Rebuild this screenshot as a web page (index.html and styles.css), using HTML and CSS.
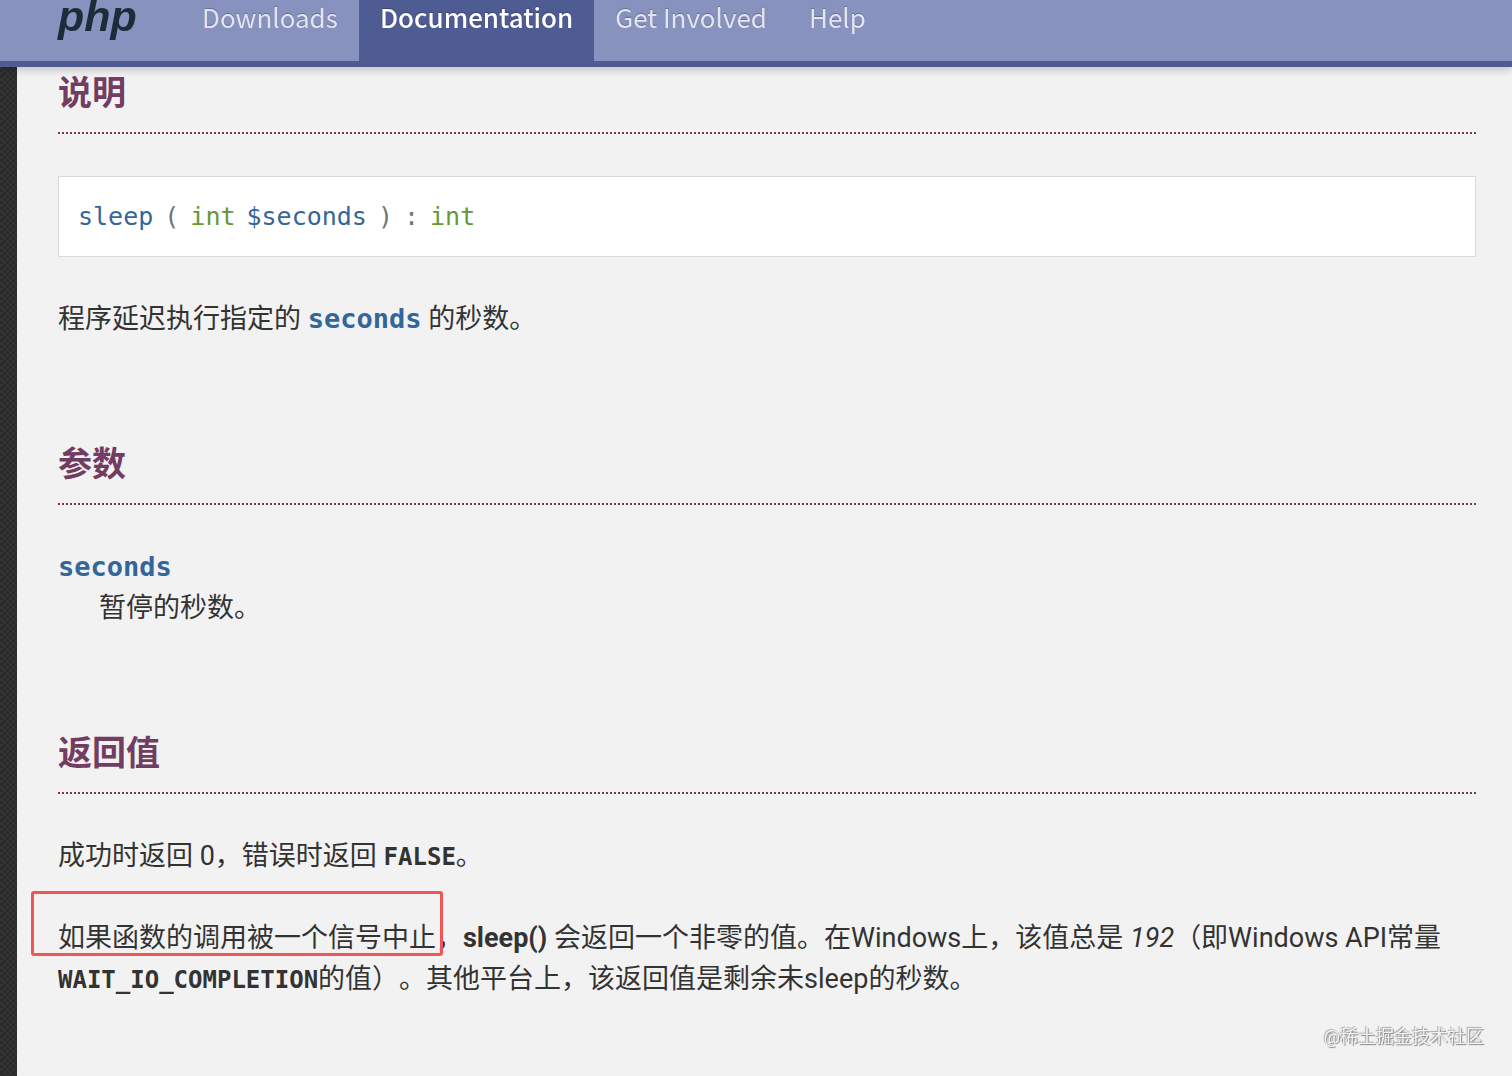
FILE: index.html
```html
<!DOCTYPE html>
<html lang="zh-CN">
<head>
  <meta charset="UTF-8">
  <meta name="viewport" content="width=device-width, initial-scale=1.0">
  <title>PHP: sleep - Manual</title>
  <link rel="stylesheet" href="styles.css">
</head>
<body>
  <header class="navbar">
    <a class="brand" href="#">php</a>
    <nav class="nav">
      <a href="#">Downloads</a>
      <a class="active" href="#">Documentation</a>
      <a href="#">Get Involved</a>
      <a href="#">Help</a>
    </nav>
  </header>

  <main class="content">
    <section class="refsect">
      <h2>说明</h2>
      <div class="synopsis">
        <span class="name">sleep</span>
        <span>(</span>
        <span class="type">int</span>
        <span class="name">$seconds</span>
        <span>)</span>
        <span>:</span>
        <span class="type">int</span>
      </div>
      <p>程序延迟执行指定的 <code class="parameter">seconds</code> 的秒数。</p>
    </section>

    <section class="refsect">
      <h2>参数</h2>
      <dl>
        <dt><code class="parameter">seconds</code></dt>
        <dd>暂停的秒数。</dd>
      </dl>
    </section>

    <section class="refsect">
      <h2>返回值</h2>
      <p>成功时返回 0，错误时返回 <strong><code>FALSE</code></strong>。</p>
      <p class="marked">如果函数的调用被一个信号中止，<strong>sleep()</strong> 会返回一个非零的值。在Windows上，该值总是 <em>192</em>（即Windows API常量 <strong><code>WAIT_IO_COMPLETION</code></strong>的值）。其他平台上，该返回值是剩余未sleep的秒数。</p>
    </section>
  </main>

  <div class="watermark">@稀土掘金技术社区</div>
</body>
</html>
```

FILE: styles.css
```css
*,
*::before {
  margin: 0;
  padding: 0;
  box-sizing: border-box;
}

body {
  min-height: 100vh;
  padding-left: 17px;
  font-family: Roboto, "Noto Sans CJK SC", sans-serif;
  font-size: 27px;
  line-height: 41px;
  color: #333;
  text-spacing-trim: space-all;
  background: repeating-conic-gradient(#2a2a2a 0 25%, #333 0 50%) 0 0 / 6px 6px;
}

/* Top bar */
.navbar {
  position: fixed;
  top: 0;
  left: 0;
  right: 0;
  z-index: 1;
  display: flex;
  height: 67px;
  padding-left: 58px;
  background: #8892bf;
  border-bottom: 6px solid #4f5b93;
  box-shadow: 0 3px 8px rgba(0, 0, 0, 0.2);
}

.brand {
  width: 123px;
  font-family: "Liberation Sans", sans-serif;
  font-size: 43px;
  font-weight: 700;
  font-style: italic;
  line-height: 32px;
  color: #1e2b38;
  text-decoration: none;
}

.nav {
  display: flex;
}

.nav a {
  padding: 0 21px;
  font-family: "Noto Sans CJK SC", sans-serif;
  font-size: 26px;
  line-height: 34px;
  color: #e2e4ef;
  text-decoration: none;
  text-shadow: 0 -1px 1px rgba(0, 0, 0, 0.25);
}

.nav .active {
  font-weight: 500;
  color: #fff;
  background: #4f5b93;
}

/* Manual page */
.content {
  min-height: 100vh;
  padding: 69px 36px 0 41px;
  background: #f2f2f2;
}

.refsect {
  margin-bottom: 100px;
}

.refsect:last-child {
  margin-bottom: 0;
}

h2 {
  margin-bottom: 42px;
  padding-bottom: 15px;
  font-size: 34px;
  font-weight: 700;
  line-height: 48px;
  color: #733d62;
  border-bottom: 2px dotted #793862;
}

p + p {
  margin-top: 41px;
}

code {
  font-family: "DejaVu Sans Mono", monospace;
  font-size: 24px;
  line-height: 1;
}

.parameter {
  font-size: 27px;
  font-weight: 700;
  color: #369;
}

.synopsis {
  display: flex;
  gap: 11px;
  margin-bottom: 42px;
  padding: 19px;
  font-family: "DejaVu Sans Mono", monospace;
  font-size: 25px;
  color: #737373;
  background: #fff;
  border: 1px solid #d9d9d9;
}

.synopsis .name {
  color: #369;
}

.synopsis .type {
  color: #693;
}

dd {
  margin-left: 41px;
}

/* Red frame over the start of the paragraph */
.marked {
  position: relative;
}

.marked::before {
  content: "";
  position: absolute;
  top: -27px;
  left: -27px;
  width: 412px;
  height: 65px;
  border: 3px solid #f25555;
  border-radius: 3px;
}

.watermark {
  position: fixed;
  right: 28px;
  bottom: 26px;
  font-size: 18px;
  line-height: 26px;
  color: #f2f2f2;
  text-shadow: 1px 1px 1px #888, -1px -1px 1px #aaa;
}
```
